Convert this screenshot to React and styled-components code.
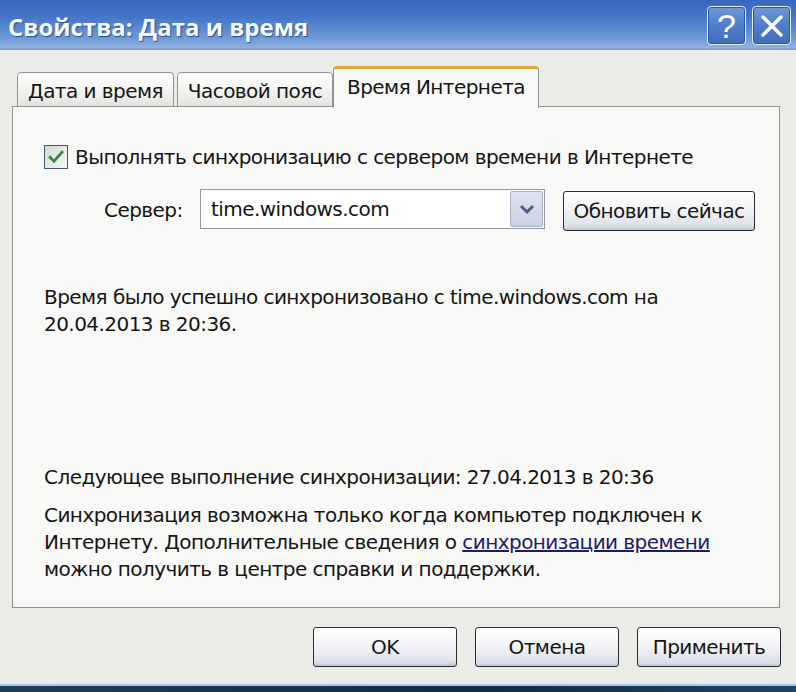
import React from "react";
import styled, { createGlobalStyle } from "styled-components";

const GlobalStyle = createGlobalStyle`
  html, body {
    margin: 0;
    padding: 0;
    background: #ebebe8;
    overflow: hidden;
  }
`;

const Window = styled.div`
  width: 796px;
  height: 692px;
  display: flex;
  flex-direction: column;
  background: #ebebe8;
  font-family: "DejaVu Sans", Verdana, sans-serif;
  font-size: 20px;
  letter-spacing: -0.55px;
  color: #151515;
`;

const TitleBar = styled.div`
  height: 50px;
  flex: none;
  display: flex;
  align-items: center;
  justify-content: space-between;
  padding: 0 5px 0 8px;
  box-sizing: border-box;
  background: linear-gradient(
    to bottom,
    #3867bd 0%,
    #4676c8 35%,
    #6d99d8 75%,
    #8db2e2 96%,
    #6f8fb8 100%
  );
`;

const Title = styled.div`
  font-family: "Open Sans", "DejaVu Sans", sans-serif;
  font-weight: 700;
  font-size: 24px;
  letter-spacing: 0;
  color: #f4f8ff;
  text-shadow: 1px 1px 1px #2b4d86;
  margin-top: 2px;
`;

const TitleButtons = styled.div`
  display: flex;
  gap: 6px;
  margin-top: 1px;
`;

const TitleButton = styled.div`
  width: 39px;
  height: 39px;
  box-sizing: border-box;
  border: 1px solid #e8f0fb;
  border-radius: 4px;
  box-shadow: inset 0 0 0 1px #2c559c;
  background: linear-gradient(to bottom, #6f98d8, #4d7cc8 55%, #3f6dbd);
  display: flex;
  align-items: center;
  justify-content: center;
  color: #fff;
  font-family: "Liberation Sans", Arial, sans-serif;
  font-size: 34px;
  font-weight: 400;
  letter-spacing: 0;
  line-height: 1;
`;

const Client = styled.div`
  flex: 1;
  display: flex;
  flex-direction: column;
  padding: 16px 16px 0 12px;
`;

const Tabs = styled.div`
  height: 41px;
  display: flex;
  align-items: flex-end;
  padding-left: 5px;
  position: relative;
  z-index: 1;
`;

const Tab = styled.div`
  box-sizing: border-box;
  width: ${(p) => p.$w}px;
  margin-right: ${(p) => p.$mr || 0}px;
  height: ${(p) => (p.$active ? 42 : 35)}px;
  margin-bottom: ${(p) => (p.$active ? -1 : 0)}px;
  border: 1px solid #8e9396;
  border-bottom: ${(p) => (p.$active ? "none" : "1px solid #8e9396")};
  border-top: ${(p) => (p.$active ? "3px solid #e6a53a" : "1px solid #8e9396")};
  border-radius: 4px 4px 0 0;
  background: ${(p) =>
    p.$active
      ? "#f8f8f6"
      : "linear-gradient(to bottom, #ffffff, #f1f1ee 60%, #e2e2dd)"};
  display: flex;
  align-items: center;
  justify-content: center;
  padding-top: ${(p) => (p.$active ? 0 : 2)}px;
  padding-bottom: ${(p) => (p.$active ? 4 : 0)}px;
  white-space: nowrap;
`;

const Panel = styled.div`
  box-sizing: border-box;
  height: 502px;
  margin-top: -1px;
  border: 1px solid #8e9396;
  background: #f8f8f6;
  padding: 37px 20px 0 31px;
  display: flex;
  flex-direction: column;
`;

const CheckRow = styled.label`
  display: flex;
  align-items: center;
  height: 26px;
  gap: 7px;
`;

const CheckBox = styled.span`
  width: 24px;
  height: 24px;
  box-sizing: border-box;
  border: 1px solid #3f5a6e;
  background: linear-gradient(135deg, #d4dcd4, #f6f7f4);
  display: flex;
  align-items: center;
  justify-content: center;
`;

const ServerRow = styled.div`
  display: flex;
  align-items: center;
  margin-top: 19px;
  height: 42px;
`;

const ServerLabel = styled.span`
  margin-left: 60px;
  width: 96px;
  flex: none;
`;

const Combo = styled.div`
  box-sizing: border-box;
  width: 345px;
  height: 40px;
  border: 1px solid #8e9aa8;
  background: #fff;
  display: flex;
  align-items: stretch;
  margin-top: -2px;
`;

const ComboText = styled.div`
  flex: 1;
  display: flex;
  align-items: center;
  padding-left: 10px;
`;

const ComboButton = styled.div`
  width: 33px;
  margin: 1px;
  box-sizing: border-box;
  border: 1px solid #a6b0bf;
  border-radius: 2px;
  background: linear-gradient(to bottom, #dfe5ef, #c9d2e2);
  display: flex;
  align-items: center;
  justify-content: center;
`;

const Button = styled.div`
  box-sizing: border-box;
  width: ${(p) => p.$w}px;
  height: 40px;
  border: 1px solid #2a2d33;
  border-radius: 3px;
  background: linear-gradient(to bottom, #ffffff 0%, #f3f4f6 45%, #dfe3ea 85%, #cdd3dd 100%);
  box-shadow: inset 0 -2px 0 #c3cad6;
  display: flex;
  align-items: center;
  justify-content: center;
  white-space: nowrap;
`;

const UpdateButton = styled(Button)`
  margin-left: 18px;
  margin-top: 2px;
`;

const Text = styled.p`
  margin: ${(p) => p.$mt}px 0 0 0;
  line-height: 27px;
`;

const HelpLink = styled.span`
  color: #1c1c6a;
  text-decoration: underline;
`;

const ButtonRow = styled.div`
  display: flex;
  justify-content: flex-end;
  gap: 18px;
  margin: 19px -1px 0 0;
`;

const Taskbar = styled.div`
  height: 6px;
  flex: none;
  border-top: 2px solid #a9c6e4;
  background: linear-gradient(to right, #1d3d5c, #163451 30%, #0f2a45 60%, #1e4466);
`;

const Check = () => (
  <svg width="18" height="18" viewBox="0 0 18 18">
    <path
      d="M3 9.2 L7 13.2 L15 4.2"
      fill="none"
      stroke="#3a8746"
      strokeWidth="2.8"
      strokeLinecap="square"
    />
  </svg>
);

const Chevron = () => (
  <svg width="18" height="12" viewBox="0 0 18 12">
    <path
      d="M3 3 L9 9 L15 3"
      fill="none"
      stroke="#4a5f86"
      strokeWidth="3"
    />
  </svg>
);

export default function App() {
  return (
    <Window>
      <GlobalStyle />
      <TitleBar>
        <Title>Свойства: Дата и время</Title>
        <TitleButtons>
          <TitleButton>?</TitleButton>
          <TitleButton>
            <svg width="26" height="26" viewBox="0 0 26 26">
              <path
                d="M4 4 L22 22 M22 4 L4 22"
                stroke="#fff"
                strokeWidth="3.4"
                strokeLinecap="round"
              />
            </svg>
          </TitleButton>
        </TitleButtons>
      </TitleBar>
      <Client>
        <Tabs>
          <Tab $w={157} $mr={3}>Дата и время</Tab>
          <Tab $w={156}>Часовой пояс</Tab>
          <Tab $w={206} $active>Время Интернета</Tab>
        </Tabs>
        <Panel>
          <CheckRow>
            <CheckBox>
              <Check />
            </CheckBox>
            Выполнять синхронизацию с сервером времени в Интернете
          </CheckRow>
          <ServerRow>
            <ServerLabel>Сервер:</ServerLabel>
            <Combo>
              <ComboText>time.windows.com</ComboText>
              <ComboButton>
                <Chevron />
              </ComboButton>
            </Combo>
            <UpdateButton $w={192}>Обновить сейчас</UpdateButton>
          </ServerRow>
          <Text $mt={53}>
            Время было успешно синхронизовано с time.windows.com на
            <br />
            20.04.2013 в 20:36.
          </Text>
          <Text $mt={126}>Следующее выполнение синхронизации: 27.04.2013 в 20:36</Text>
          <Text $mt={11}>
            Синхронизация возможна только когда компьютер подключен к
            <br />
            Интернету. Дополнительные сведения о{" "}
            <HelpLink>синхронизации времени</HelpLink>
            <br />
            можно получить в центре справки и поддержки.
          </Text>
        </Panel>
        <ButtonRow>
          <Button $w={144}>OK</Button>
          <Button $w={144}>Отмена</Button>
          <Button $w={144}>Применить</Button>
        </ButtonRow>
      </Client>
      <Taskbar />
    </Window>
  );
}
